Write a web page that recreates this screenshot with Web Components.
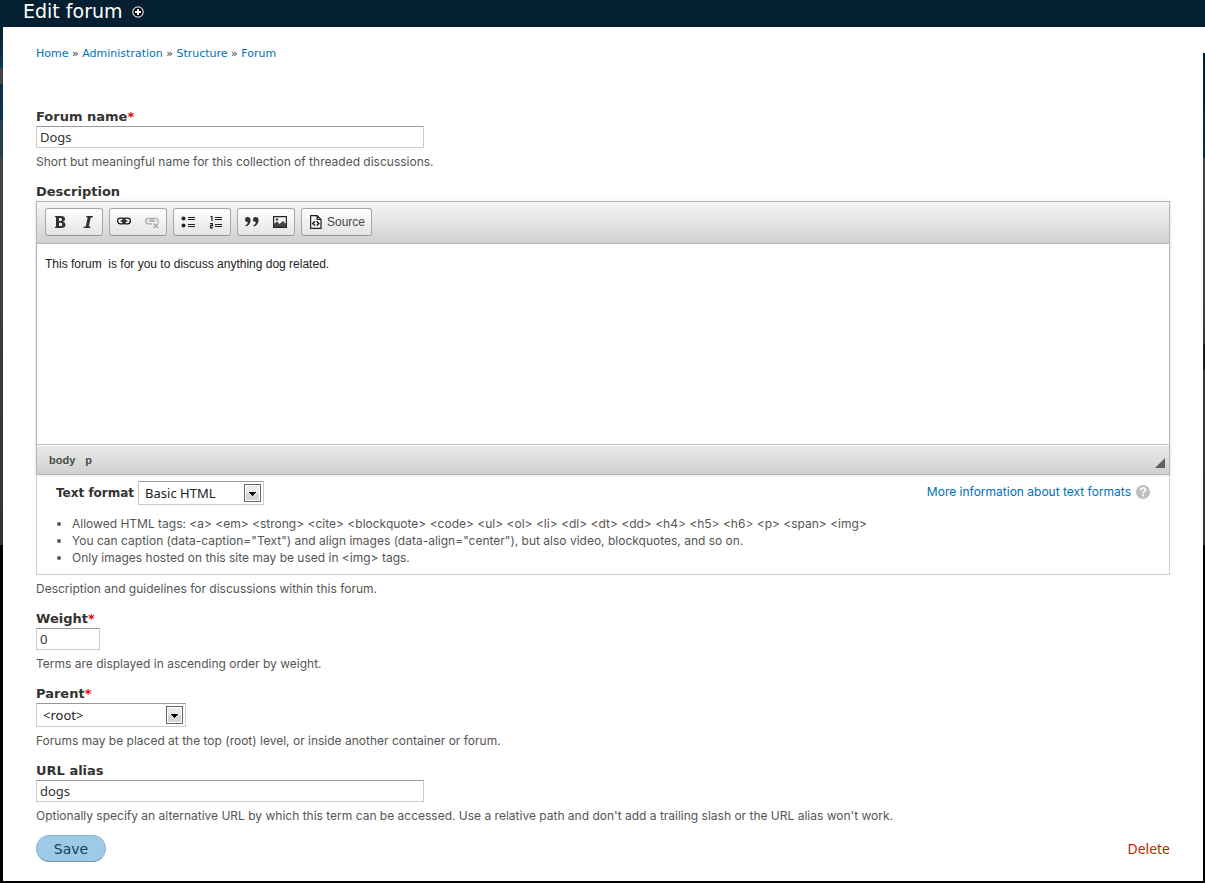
<!DOCTYPE html>
<html lang="en">
<head>
<meta charset="utf-8">
<title>Edit forum</title>
<style>
html, body { margin: 0; }
body {
  --ui: "Noto Sans", "Open Sans", sans-serif;
  --small: Inter, "Noto Sans", sans-serif;
  --strong: "DejaVu Sans", Verdana, sans-serif;
  --editor: "Liberation Sans", Arial, sans-serif;
  --link: #0071b8;
  font-family: var(--ui);
  color: #333;
  background: #000;
}
</style>
</head>
<body>
<admin-overlay heading="Edit forum">
  <bread-crumb></bread-crumb>
  <entity-form>
    <text-field label="Forum name" required value="Dogs" help="Short but meaningful name for this collection of threaded discussions."></text-field>
    <rich-editor label="Description" help="Description and guidelines for discussions within this forum."></rich-editor>
    <text-field label="Weight" required short value="0" help="Terms are displayed in ascending order by weight."></text-field>
    <select-field label="Parent" required option="&lt;root&gt;" help="Forums may be placed at the top (root) level, or inside another container or forum."></select-field>
    <text-field label="URL alias" value="dogs" help="Optionally specify an alternative URL by which this term can be accessed. Use a relative path and don't add a trailing slash or the URL alias won't work."></text-field>
    <form-actions></form-actions>
  </entity-form>
</admin-overlay>

<script>
const fieldCss = `
  :host { display: block; }
  .label { display: block; padding-top: 2px; font: bold 13px/18px var(--strong); color: #333; }
  .label span { color: #e00; }
  .help { margin: 5px 0 0; font: 12px/18px var(--small); color: #555; }
  a { color: var(--link); text-decoration: none; }
`;
const star = el => el.hasAttribute('required') ? '<span>*</span>' : '';
const esc = s => s.replace(/&/g, '&amp;').replace(/</g, '&lt;').replace(/>/g, '&gt;').replace(/"/g, '&quot;');

function define(name, render) {
  customElements.define(name, class extends HTMLElement {
    constructor() { super(); this.attachShadow({ mode: 'open' }); }
    connectedCallback() { this.shadowRoot.innerHTML = render(this); }
  });
}

define('admin-overlay', el => `
  <style>
    :host { display: block; }
    header {
      display: flex; align-items: flex-start; gap: 9px; height: 27px; padding-left: 23px;
      box-sizing: border-box; background: #042030; color: #fff;
    }
    h1 { margin: 0; font: 19px/23px var(--strong); }
    button { margin: 6px 0 0; padding: 0; border: 0; background: none; display: flex; }
    .frame {
      padding: 0 2px 2px 3px;
      background:
        linear-gradient(#fff 26px, #042030 26px, #0b2a3c 131px, #444 131px, #3c3c3c 317px, #1b1b1b 317px, #1b1b1b 343px, #3a3a3a 343px, #333 518px, #000 518px) right / 2px 100% no-repeat,
        linear-gradient(#042030, #0d3a55 41px, #444 41px, #444 57px, #0b2f45 57px, #0d3650 93px, #2a3f4c 93px, #2c3e49 131px, #444 131px, #333 518px, #000 518px) left / 3px 100% no-repeat,
        #000;
    }
    main { background: #fff; padding: 18px 33px 19px; }
  </style>
  <header>
    <h1>${esc(el.getAttribute('heading'))}</h1>
    <button type="button" aria-label="Add to shortcuts">
      <svg width="12" height="12" viewBox="0 0 12 12"><circle cx="6" cy="6" r="5.2" fill="#000" stroke="#ddd" stroke-width="1.2"/><path d="M6 3v6M3 6h6" stroke="#fff" stroke-width="2"/></svg>
    </button>
  </header>
  <div class="frame"><main><slot></slot></main></div>
`);

define('bread-crumb', () => `
  <style>
    :host { display: block; }
    nav { font: 11px/18px var(--strong); color: #333; }
    a { color: var(--link); text-decoration: none; }
  </style>
  <nav><a href="#">Home</a> » <a href="#">Administration</a> » <a href="#">Structure</a> » <a href="#">Forum</a></nav>
`);

define('entity-form', () => `
  <style>
    :host { display: block; margin-top: 43px; }
    form { display: flex; flex-direction: column; gap: 10px; }
  </style>
  <form><slot></slot></form>
`);

define('text-field', el => `
  <style>${fieldCss}
    input {
      display: block; box-sizing: border-box; width: 388px; max-width: 100%; height: 22px; padding: 0 3px;
      border: 1px solid #ccc; border-top-color: #999; background: #fff; color: #333; font: 13px/20px var(--ui);
    }
    :host([short]) input { width: 64px; }
  </style>
  <label class="label" for="f">${esc(el.getAttribute('label'))}${star(el)}</label>
  <input id="f" type="text" value="${esc(el.getAttribute('value'))}">
  <p class="help">${esc(el.getAttribute('help'))}</p>
`);

const dropCss = `
  .drop { display: inline-grid; align-items: center; vertical-align: top; }
  .drop > * { grid-area: 1 / 1; }
  .drop svg { justify-self: end; margin-right: 3px; pointer-events: none; }
  select {
    appearance: none; box-sizing: border-box; height: 24px; margin: 0; padding: 0 24px 0 6px;
    border: 1px solid #ccc; border-top-color: #999; border-radius: 0; background: #fff; color: #222;
    font: 13px/20px var(--ui);
  }
`;
const dropIcon = `<svg width="17" height="18" viewBox="0 0 17 18"><rect x=".5" y=".5" width="16" height="17" fill="#fff" stroke="#666"/><rect x="2" y="2" width="13" height="14" fill="#ececec"/><rect x="2" y="9" width="13" height="7" fill="#d6d6d6"/><path d="M5 8h7v1h-1v1h-1v1H9v1H8v-1H7v-1H6V9H5z"/></svg>`;

define('select-field', el => `
  <style>${fieldCss}${dropCss} select { width: 150px; }</style>
  <label class="label" for="f">${esc(el.getAttribute('label'))}${star(el)}</label>
  <div class="drop"><select id="f"><option>${esc(el.getAttribute('option'))}</option></select>${dropIcon}</div>
  <p class="help">${esc(el.getAttribute('help'))}</p>
`);

const icons = {
  Bold: '<path fill="#333" fill-rule="evenodd" d="M3 2h6q4 0 4 3.300 0 2-2 2.500 2.500.5 2.500 2.900Q13.500 14 9 14H3v-1.200h1V3.200H3zM7 4v3h1.500q1.500 0 1.500-1.500T8.500 4zm0 4.800V12h1.700q1.600 0 1.600-1.600T8.700 8.800z"/>',
  Italic: '<path fill="#333" d="M6.500 2H13l-.4 1.600h-1.800L8.800 12.400h1.800L10.200 14H3.500l.4-1.600h1.800L7.700 3.600H6.100z"/>',
  Link: '<g fill="none" stroke="#1a1a1a" stroke-width="1.300"><rect x="1.600" y="4.200" width="7.600" height="5.600" rx="2.800"/><rect x="6.800" y="4.200" width="7.600" height="5.600" rx="2.800"/><path d="M4.500 7h7"/></g>',
  Unlink: '<g fill="none" stroke="#aaa" stroke-width="1.300"><path d="M8 9.800H4.300a2.700 2.700 0 010-5.400h2.300a2.700 2.700 0 012.700 2.700M6.700 7.100a2.700 2.700 0 012.600-2.700h2.300a2.700 2.700 0 012.300 4.100M4.500 7.100h7"/><path d="M9.500 9.500l4.500 4.500M14 9.500l-4.500 4.500" stroke-width="1.600"/></g>',
  'Bulleted list': '<g fill="#222"><circle cx="3.500" cy="4.500" r="2"/><circle cx="3.500" cy="11.500" r="2"/><path d="M8 3h7v1H8zM8 5h7v1H8zM8 10h7v1H8zM8 12h7v1H8z"/></g>',
  'Numbered list': '<path d="M7 3h7v1H7zM7 5h7v1H7zM7 10h7v1H7zM7 12h7v1H7z" fill="#222"/><path fill="none" stroke="#222" stroke-width="1.200" d="M2.500 2.600H4V7M2 9.600h2.400v2H2.600v2.300H5"/>',
  Quote: '<path fill="#333" d="M1 5.400Q1 3 3.500 3 6.600 3 6.600 6.300q0 4.700-4.800 6.300L1.300 11.500q2.400-1.200 2.600-3.600Q1 8 1 5.400zM9 5.400Q9 3 11.500 3q3.100 0 3.100 3.300 0 4.700-4.800 6.300l-.5-1.100q2.400-1.200 2.600-3.600Q9 8 9 5.400z"/>',
  Image: '<path fill="#222" fill-rule="evenodd" d="M1 2h14v12H1zM2.200 3.200v9.600h11.600V3.200z"/><path fill="#444" d="M2 13v-3l3-2.500L7.500 10 11 7l3 3v3z"/><circle cx="5" cy="5.500" r="1.200" fill="#444"/>',
  Source: '<path fill="none" stroke="#222" stroke-width="1.200" d="M2.600 1.600h6.500L13 5.500v8.900H2.600zM9.100 1.600v3.900H13"/><path fill="none" stroke="#222" stroke-width="1.500" d="M6.900 7.200L4.800 9.400l2.100 2.200M8.700 7.200l2.100 2.200-2.100 2.200"/>'
};
define('tool-group', el => `
  <style>
    :host {
      display: flex; box-sizing: border-box; height: 28px; border: 1px solid #a6a6a6; border-bottom-color: #979797;
      border-radius: 3px; background: linear-gradient(#fff, #e4e4e4);
    }
    button {
      display: flex; align-items: center; justify-content: center; gap: 3px; min-width: 28px; padding: 0 6px;
      border: 0; background: none; font: 12px/18px var(--editor); color: #474747;
    }
  </style>
  ${el.getAttribute('tools').split(',').map(t => `<button type="button" aria-label="${t}"><svg width="16" height="16" viewBox="0 0 16 16">${icons[t]}</svg>${t === 'Source' ? 'Source' : ''}</button>`).join('')}
`);

define('rich-editor', el => `
  <style>${fieldCss}${dropCss}
    .box { border: 1px solid #b6b6b6; box-shadow: 0 0 3px rgba(0,0,0,.15); }
    .tools {
      display: flex; flex-wrap: wrap; gap: 6px; padding: 6px 8px 7px; border-bottom: 1px solid #b6b6b6;
      background: linear-gradient(#f5f5f5, #cfd1cf);
    }
    textarea {
      display: block; box-sizing: border-box; width: 100%; height: 200px; padding: 11px 8px; border: 0; resize: none;
      background: #fff; color: #222; font: 12px/18px var(--editor);
    }
    .path {
      display: flex; align-items: center; gap: 10px; height: 29px; padding: 0 4px 0 12px;
      border-top: 1px solid #bfbfbf; box-shadow: inset 0 1px 0 #fff; background: linear-gradient(#ebebeb, #cfd1cf);
    }
    .path a { color: #484848; font: bold 11px/16px var(--editor); }
    .path svg { margin: 6px 0 0 auto; }
    .format { border: 1px solid #ccc; border-top: 0; padding: 6px 19px 8px; }
    .row { display: flex; justify-content: space-between; flex-wrap: wrap; }
    .pick { display: flex; align-items: center; gap: 4px; }
    .pick label { font: bold 12px/20px var(--strong); }
    select { width: 126px; }
    .more { display: flex; align-items: center; gap: 5px; height: 22px; font: 12px/18px var(--small); }
    ul { margin: 10px 0 0; padding-left: 16px; font: 12px/17px var(--small); color: #555; }
  </style>
  <label class="label" for="body">${esc(el.getAttribute('label'))}</label>
  <div class="box">
    <div class="tools">
      <tool-group tools="Bold,Italic"></tool-group>
      <tool-group tools="Link,Unlink"></tool-group>
      <tool-group tools="Bulleted list,Numbered list"></tool-group>
      <tool-group tools="Quote,Image"></tool-group>
      <tool-group tools="Source"></tool-group>
    </div>
    <textarea id="body">This forum&nbsp; is for you to discuss anything dog related.</textarea>
    <div class="path"><a href="#">body</a><a href="#">p</a>
      <svg width="10" height="10" viewBox="0 0 10 10"><path d="M10 0v10H0z" fill="#606060"/></svg>
    </div>
  </div>
  <div class="format">
    <div class="row">
      <div class="pick"><label for="fmt">Text format</label>
        <div class="drop"><select id="fmt"><option>Basic HTML</option></select>${dropIcon}</div>
      </div>
      <a class="more" href="#">More information about text formats
        <svg width="14" height="14" viewBox="0 0 14 14"><circle cx="7" cy="7" r="7" fill="#bfbfbf"/><path d="M4.700 5.300C4.700 3.700 5.700 3 7 3s2.400.7 2.400 2c0 1.700-2.300 1.600-2.300 3.500" fill="none" stroke="#fff" stroke-width="1.700"/><path d="M6.200 9.600h1.800v1.700H6.200z" fill="#fff"/></svg>
      </a>
    </div>
    <ul>
      <li>${esc('Allowed HTML tags: <a> <em> <strong> <cite> <blockquote> <code> <ul> <ol> <li> <dl> <dt> <dd> <h4> <h5> <h6> <p> <span> <img>')}</li>
      <li>You can caption (data-caption="Text") and align images (data-align="center"), but also video, blockquotes, and so on.</li>
      <li>Only images hosted on this site may be used in &lt;img&gt; tags.</li>
    </ul>
  </div>
  <p class="help">${esc(el.getAttribute('help'))}</p>
`);

define('form-actions', () => `
  <style>
    :host { display: flex; justify-content: space-between; align-items: center; }
    button {
      width: 70px; height: 27px; padding: 0; border: 1px solid #8eb7cd; border-bottom-color: #6f97ae; border-radius: 14px;
      background: #9dcae7; color: #144159; font: 14px/20px var(--strong);
    }
    a { color: #c71f00; text-decoration: none; font: 14px/20px var(--ui); }
  </style>
  <button type="submit">Save</button><a href="#">Delete</a>
`);
</script>
</body>
</html>
